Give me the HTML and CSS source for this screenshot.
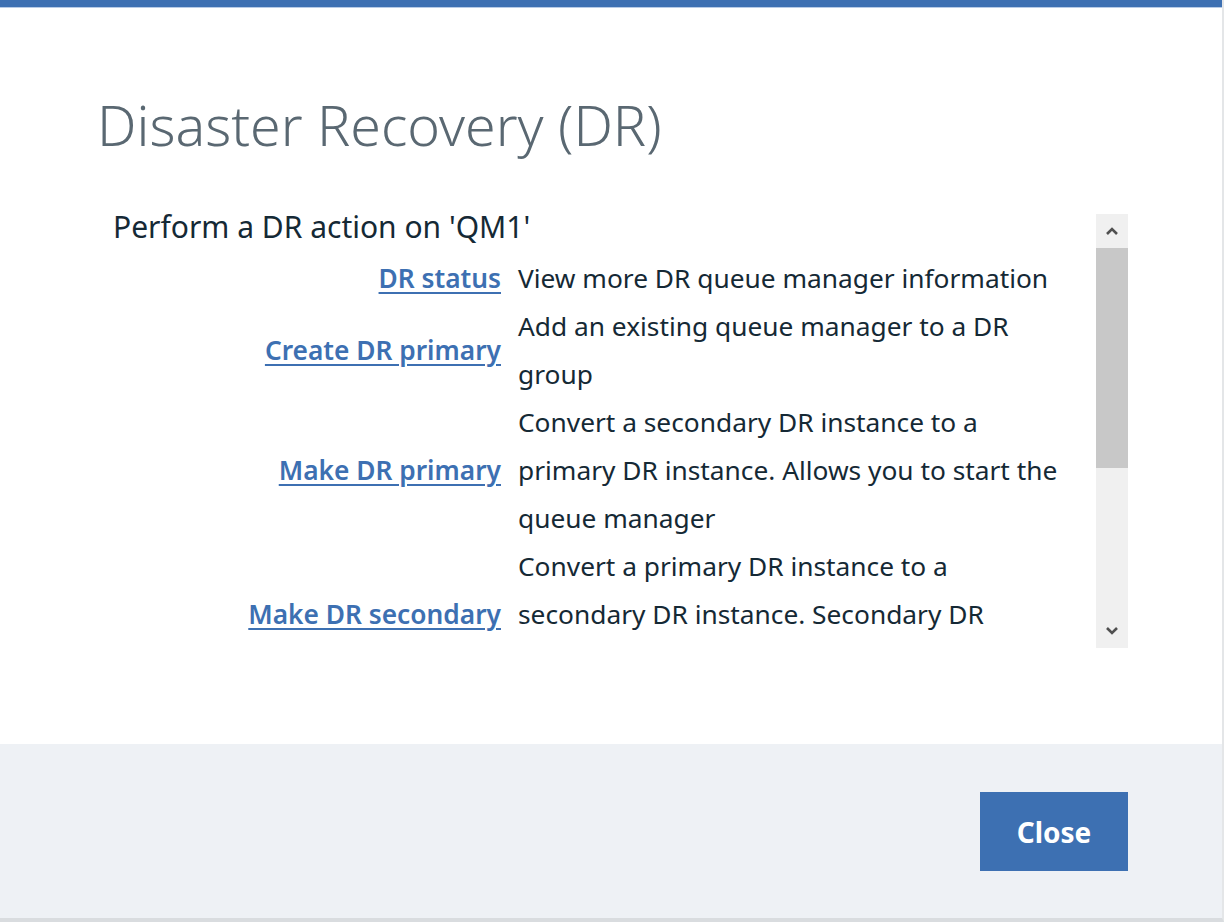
FILE: index.html
```html
<!DOCTYPE html>
<html lang="en">
<head>
<meta charset="utf-8">
<title>Disaster Recovery (DR)</title>
<link rel="stylesheet" href="styles.css">
</head>
<body>
<div class="modal">
  <div class="modal-top"></div>
  <div class="modal-main">
    <h1 class="modal-title">Disaster Recovery (DR)</h1>
    <div class="scroll-area">
      <div class="scroll-content">
        <p class="intro">Perform a DR action on 'QM1'</p>
        <div class="actions">
          <a class="action-link" href="#">DR status</a>
          <span class="action-desc">View more DR queue manager information</span>
          <a class="action-link" href="#">Create DR primary</a>
          <span class="action-desc">Add an existing queue manager to a DR group</span>
          <a class="action-link" href="#">Make DR primary</a>
          <span class="action-desc">Convert a secondary DR instance to a primary DR instance. Allows you to start the queue manager</span>
          <a class="action-link" href="#">Make DR secondary</a>
          <span class="action-desc">Convert a primary DR instance to a secondary DR instance. Secondary DR instances cannot be started</span>
        </div>
      </div>
      <div class="scrollbar">
        <div class="sb-btn">
          <svg width="12" height="8" viewBox="0 0 12 8"><path d="M1 7 L6 2 L11 7" fill="none" stroke="#505050" stroke-width="2.6"/></svg>
        </div>
        <div class="sb-track">
          <div class="sb-thumb"></div>
        </div>
        <div class="sb-btn">
          <svg width="12" height="8" viewBox="0 0 12 8"><path d="M1 1 L6 6 L11 1" fill="none" stroke="#505050" stroke-width="2.6"/></svg>
        </div>
      </div>
    </div>
  </div>
  <div class="modal-footer">
    <button class="btn-primary" type="button">Close</button>
  </div>
</div>
</body>
</html>
```

FILE: styles.css
```css
html, body {
  margin: 0;
  padding: 0;
  background: #ffffff;
}
body {
  font-family: "Noto Sans", "Open Sans", sans-serif;
  color: #152935;
}
.modal {
  width: 1224px;
  height: 922px;
  box-sizing: border-box;
  display: flex;
  flex-direction: column;
  border-right: 2px solid #e4e6e8;
  border-bottom: 4px solid #d9dcdf;
}
.modal-top {
  height: 7px;
  background: #3d70b2;
  border-bottom: 1px solid #b7cbe6;
  flex: none;
}
.modal-main {
  flex: 1;
  padding: 0 94px 0 97px;
}
.modal-title {
  margin: 77px 0 0 0;
  font-size: 55.5px;
  line-height: 80px;
  font-weight: 300;
  color: #5a6872;
}
.scroll-area {
  margin-top: 49px;
  display: flex;
  height: 434px;
}
.scroll-content {
  flex: 1;
  overflow: visible;
  clip-path: inset(-30px 0 0 0);
  padding-left: 16px;
}
.intro {
  margin: -2px 0 12px 0;
  font-size: 30px;
  line-height: 30px;
}
.actions {
  display: grid;
  grid-template-columns: 388px 555px;
  column-gap: 17px;
  font-size: 26.3px;
  line-height: 48px;
}
.action-link {
  text-align: right;
  align-self: center;
  color: #3d70b2;
  font-weight: 600;
  text-decoration: underline;
  text-underline-offset: 4px;
}
.action-desc {
  color: #152935;
}
.scrollbar {
  width: 32px;
  flex: none;
  background: #f0f0f0;
  display: flex;
  flex-direction: column;
}
.sb-btn {
  height: 34px;
  display: flex;
  align-items: center;
  justify-content: center;
}
.sb-track {
  flex: 1;
}
.sb-thumb {
  height: 220px;
  background: #c8c8c8;
}
.modal-footer {
  flex: none;
  height: 174px;
  background: #eef1f5;
  display: flex;
  justify-content: flex-end;
  align-items: flex-start;
  padding: 48px 94px 0 0;
  box-sizing: border-box;
}
.btn-primary {
  width: 148px;
  height: 79px;
  background: #3d70b2;
  border: none;
  color: #ffffff;
  font-family: "Noto Sans", "Open Sans", sans-serif;
  font-size: 28px;
  font-weight: 700;
}
```
